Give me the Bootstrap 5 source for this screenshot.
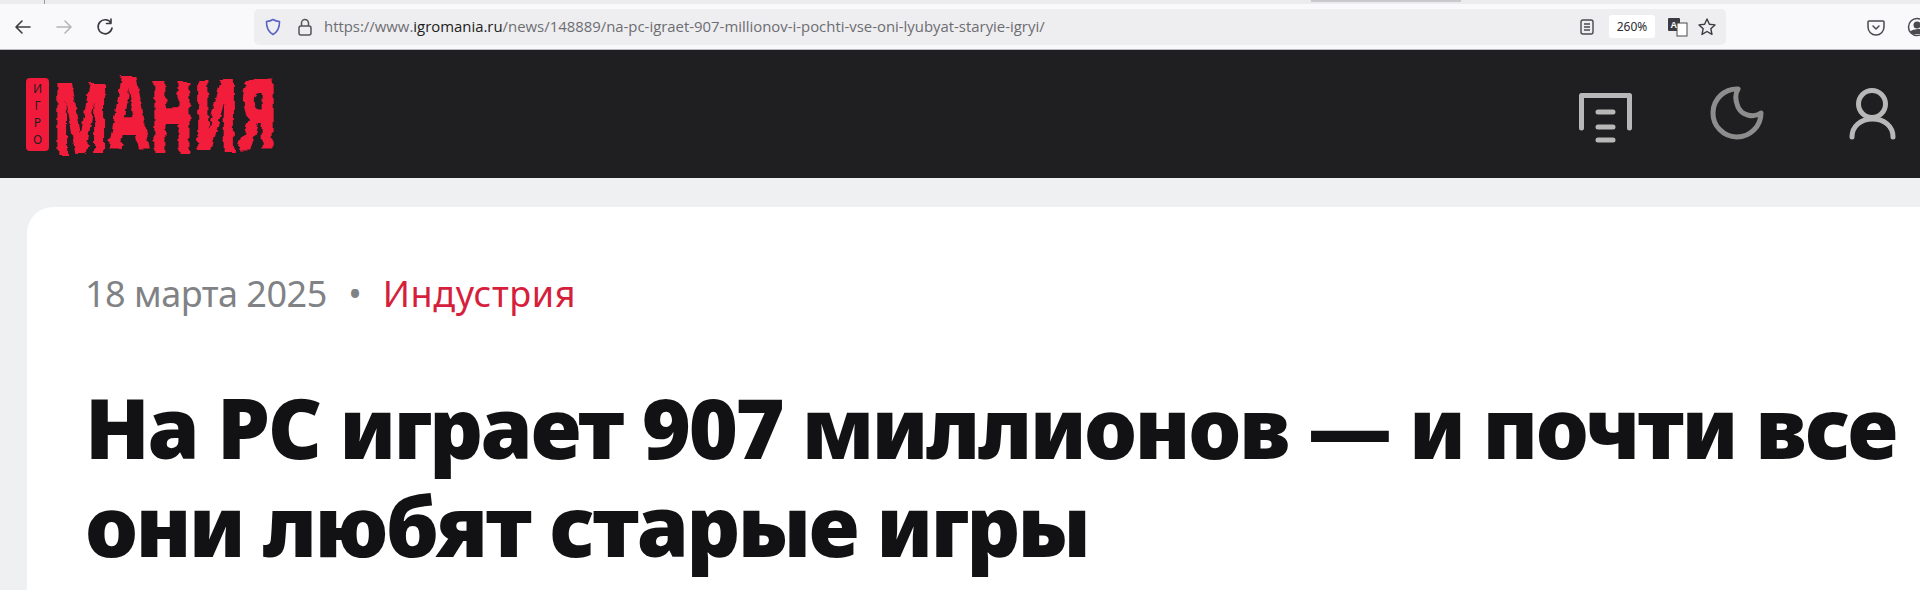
<!DOCTYPE html>
<html lang="ru">
  <head>
    <meta charset="UTF-8" />
    <meta name="viewport" content="width=device-width, initial-scale=1.0" />
    <title>Игромания</title>
    <link href="https://cdn.jsdelivr.net/npm/bootstrap@5.3.3/dist/css/bootstrap.min.css" rel="stylesheet" />
    <style>
      html, body { height: 590px; overflow: hidden; }
      body { background: #eff0f2; font-family: "Noto Sans", sans-serif; }

      .tab-strip { height: 4px; background: #ececef; }
      .tab-sep { width: 1px; height: 4px; background: #9a9a9e; margin-left: 44px; }
      .tab-active { width: 150px; height: 2px; background: #c9c9cd; margin-left: 1266px; }

      .browser-bar { height: 46px; background: #f9f9fb; border-bottom: 1px solid #b9b9bd; padding-left: 13px; }
      .nav-ico { width: 20px; height: 20px; fill: none; stroke: #3c3c40; stroke-width: 1.6; stroke-linecap: round; stroke-linejoin: round; }
      .nav-ico.off { stroke: #b5b5b8; }
      .nav-gap { margin-left: 21px; }
      .addr-box { width: 1472px; height: 36px; margin-left: 139px; background: #eeeef0; border-radius: 5px; padding-left: 9px; padding-right: 9px; }
      .addr-lock { margin-left: 13px; }
      .addr-url { font-family: "Open Sans", sans-serif; font-size: 14.9px; color: #6d6d72; margin-left: 10px; white-space: nowrap; }
      .addr-url b { color: #1c1c20; font-weight: 400; }
      .zoom-pill { width: 46px; height: 23px; margin: 0 12px 0 14px; background: #fff; border-radius: 3px; font-size: 12px; color: #2c2c30; }
      .trans-ico { margin-right: 8px; }
      .right-tools { margin-left: 140px; }

      .site-head { height: 128px; background: #1f1f21; padding-left: 26px; padding-right: 18px; }
      .logo-tag { width: 23px; height: 73px; background: #f21a3a; border-radius: 4px; writing-mode: vertical-rl; text-orientation: upright; font-size: 12px; line-height: 23px; text-align: center; color: #1f1f21; }
      .logo-word { margin-left: 4px; margin-top: 4px; overflow: visible; }
      .logo-word text { font-family: "Noto Sans", sans-serif; font-weight: 900; font-size: 100px; fill: #f21a3a; }
      .head-tools { gap: 73px; }
      .head-ico { width: 60px; height: 60px; fill: none; stroke: #b8b8b8; stroke-width: 5; stroke-linecap: round; stroke-linejoin: round; }
      .head-ico.dim { stroke: #8d8d8d; }

      .article-sheet { margin-left: 27px; margin-top: 29px; height: 383px; background: #fff; border-radius: 26px 0 0 0; padding-left: 58px; padding-top: 63px; }
      .meta-line { font-size: 36px; line-height: 48px; color: #808285; letter-spacing: -.5px; white-space: nowrap; }
      .meta-dot { display: inline-block; width: 56px; text-align: center; }
      .meta-cat { color: #d51f3d; text-decoration: none; letter-spacing: .6px; }
      .news-title { margin: 60px 0 0; font-family: "Noto Sans", sans-serif; font-weight: 900; font-size: 84px; line-height: 98px; color: #121214; white-space: nowrap; letter-spacing: -2.3px; }
    </style>
  </head>
  <body>
    <div class="tab-strip d-flex">
      <div class="tab-sep"></div>
      <div class="tab-active"></div>
    </div>

    <div class="browser-bar d-flex align-items-center">
      <svg class="nav-ico" viewBox="0 0 20 20"><path d="M17 10H3M9 4l-6 6 6 6" /></svg>
      <svg class="nav-ico off nav-gap" viewBox="0 0 20 20"><path d="M3 10h14M11 4l6 6-6 6" /></svg>
      <svg class="nav-ico nav-gap" viewBox="0 0 20 20"><path d="M16 6a7 7 0 1 0 1 5M16 2v4.500h-4.500" /></svg>
      <div class="addr-box d-flex align-items-center">
        <svg width="20" height="20" viewBox="0 0 20 20" fill="none" stroke="#5a62c8" stroke-width="1.6" stroke-linejoin="round"><path d="M10 2.500c2 1.300 4 1.800 6.500 2 .2 6-1.500 10-6.500 13-5-3-6.700-7-6.500-13 2.500-.2 4.500-.7 6.500-2z" /></svg>
        <svg class="addr-lock" width="18" height="20" viewBox="0 0 18 20" fill="none" stroke="#55555a" stroke-width="1.5"><rect x="3" y="9" width="12" height="9" rx="2" /><path d="M5.500 9V6a3.500 3.500 0 0 1 7 0v3" /></svg>
        <span class="addr-url">https://www.<b>igromania.ru</b>/news/148889/na-pc-igraet-907-millionov-i-pochti-vse-oni-lyubyat-staryie-igryi/</span>
        <svg class="ms-auto" width="16" height="20" viewBox="0 0 16 20" fill="none" stroke="#4a4a4f" stroke-width="1.4"><rect x="2" y="3" width="12" height="14" rx="2" /><path d="M5 7h6M5 10h6M5 13h6" /></svg>
        <div class="zoom-pill d-flex align-items-center justify-content-center">260%</div>
        <svg class="trans-ico" width="22" height="22" viewBox="0 0 22 22"><rect x="1" y="2" width="12" height="13" rx="1" fill="#3c3c42" /><rect x="10" y="7" width="10" height="13" fill="#fff" stroke="#4a4a4f" /><text x="3.500" y="12" font-size="9" font-weight="700" fill="#fff" font-family="Liberation Sans, sans-serif">A</text></svg>
        <svg width="20" height="20" viewBox="0 0 20 20" fill="none" stroke="#3c3c40" stroke-width="1.4" stroke-linejoin="round"><path d="M10 2l2.400 5.300 5.600.6-4.200 3.800 1.200 5.700L10 14.500l-5 2.900 1.200-5.700L2 7.900l5.600-.6z" /></svg>
      </div>
      <div class="right-tools d-flex align-items-center">
        <svg width="20" height="20" viewBox="0 0 20 20" fill="none" stroke="#4a4a4f" stroke-width="1.5" stroke-linecap="round" stroke-linejoin="round"><path d="M3 4h14a1 1 0 0 1 1 1v5a8 8 0 0 1-16 0V5a1 1 0 0 1 1-1z" /><path d="M7 9l3 3 3-3" /></svg>
      </div>
      <svg class="ms-auto" width="14" height="20" viewBox="0 0 14 20"><circle cx="11" cy="10" r="8.500" fill="none" stroke="#4a4a4f" stroke-width="1.500" /><circle cx="11" cy="8" r="3.500" fill="#4a4a4f" /><path d="M4 15c2-3 8-3 10-3v5H7z" fill="#4a4a4f" /></svg>
    </div>

    <header class="site-head d-flex align-items-center justify-content-between">
      <a class="d-flex align-items-center text-decoration-none" href="#">
        <span class="logo-tag">ИГРО</span>
        <svg class="logo-word" width="224" height="88" viewBox="0 0 224 88"><text x="0" y="78" textLength="224" lengthAdjust="spacingAndGlyphs" dy="4 -6 5 -2 -2" filter="url(#brush)">МАНИЯ</text></svg>
      </a>
      <div class="head-tools d-flex align-items-center">
        <svg class="head-ico" viewBox="0 0 60 60"><path d="M5.500 44V11.500h48V44M22 28h15M22 43h15M22 56h15" /></svg>
        <svg class="head-ico dim" viewBox="0 0 60 60"><path d="M29 5A24 24 0 1 0 52 29C45 34 33 32 29 23 26 16 26 10 29 5z" /></svg>
        <svg class="head-ico" viewBox="0 0 60 60"><circle cx="30" cy="20" r="13.500" /><path d="M10 53C10 42 19 35 30.500 35S51 42 51 53" /></svg>
      </div>
    </header>

    <main class="article-sheet">
      <div class="meta-line"><span>18 марта 2025</span><span class="meta-dot">•</span><a class="meta-cat" href="#">Индустрия</a></div>
      <h1 class="news-title">На PC играет 907 миллионов — и почти все<br />они любят старые игры</h1>
    </main>

    <svg width="0" height="0" class="position-absolute">
      <filter id="brush" x="-5%" y="-10%" width="110%" height="120%"><feTurbulence type="fractalNoise" baseFrequency="0.03 0.14" numOctaves="2" seed="4" /><feDisplacementMap in="SourceGraphic" scale="7" /></filter>
    </svg>
    <script src="https://cdn.jsdelivr.net/npm/bootstrap@5.3.3/dist/js/bootstrap.bundle.min.js"></script>
  </body>
</html>
